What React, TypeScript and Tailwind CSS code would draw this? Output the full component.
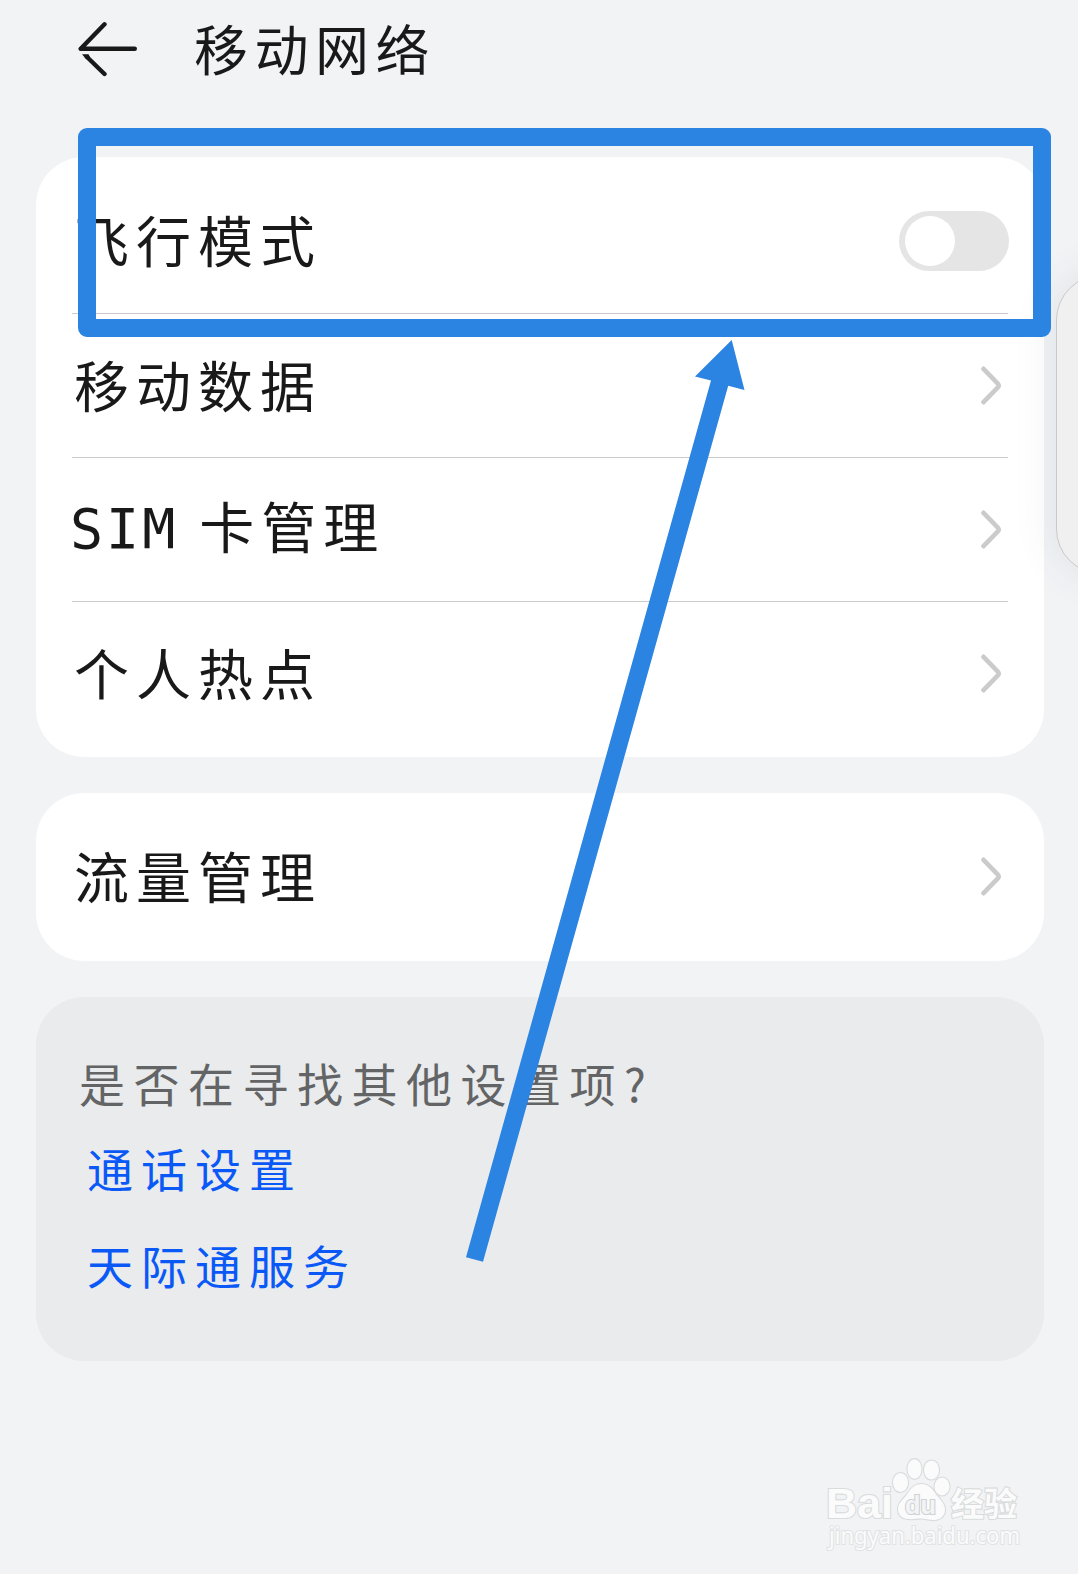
import { ReactNode } from "react";

interface RowProps {
    label: ReactNode;
    divider?: boolean;
    children?: ReactNode;
}

function BackArrow() {
    return (
        <svg
            width="60"
            height="56"
            viewBox="0 0 60 56"
            fill="none"
            stroke="#191919"
            strokeWidth="4.4"
            strokeLinecap="round"
            strokeLinejoin="round"
        >
            <path d="M26.5 3.300 L2.700 27.800 H56.800" />
            <path d="M26.500 53 L9 36" />
            <path d="M4 33.200 H10.500 L12 36 L8 38 Z" fill="#191919" stroke="none" />
        </svg>
    );
}

function Chevron() {
    return (
        <svg
            className="mr-[7px]"
            width="20"
            height="40"
            viewBox="0 0 20 40"
            fill="none"
            stroke="#cbcbcb"
            strokeWidth="4.6"
            strokeLinecap="round"
            strokeLinejoin="round"
        >
            <path d="M2.500 2.800 L16.600 17.400 Q18.600 19.500 16.600 21.600 L2.500 36.200" />
        </svg>
    );
}

function Toggle() {
    return (
        <button
            role="switch"
            aria-checked="false"
            className="-mr-px flex h-[60px] w-[110px] items-center rounded-full bg-[#e5e5e5] pl-1.5"
        >
            <span className="size-[50px] rounded-full bg-white" />
        </button>
    );
}

function Row({ label, divider, children }: RowProps) {
    return (
        <div
            className={
                divider
                    ? "flex h-36 items-center justify-between border-t border-[#cbcbcb]"
                    : "flex h-36 items-center justify-between"
            }
        >
            <span className="pb-[5px] pl-0.5 text-[55px] leading-none tracking-[7px]">{label}</span>
            {children ?? <Chevron />}
        </div>
    );
}

function Watermark() {
    return (
        <svg
            className="absolute top-[1450px] left-[820px]"
            width="210"
            height="110"
            viewBox="0 0 210 110"
            fill="#fbfbfb"
            stroke="#d9dbdc"
            strokeWidth="2.2"
            paintOrder="stroke"
        >
            <text
                x="6"
                y="68"
                fontSize="43"
                fontWeight="700"
                textLength="67"
                lengthAdjust="spacingAndGlyphs"
                className="font-['Liberation_Sans',sans-serif]"
            >
                Bai
            </text>
            <ellipse cx="80.5" cy="32.5" rx="7.5" ry="9.5" />
            <ellipse cx="94.5" cy="19" rx="7" ry="9.8" />
            <ellipse cx="111.5" cy="20" rx="7.5" ry="9.5" />
            <ellipse cx="122" cy="36.5" rx="7.5" ry="9" />
            <path d="M101.5 34 C108 34 113 39 115 43 C118 48 125 52 125 60 C125 66 120 70 114 70 C109 70 105 68.5 101.5 68.5 C97 68.5 93 69.5 88 69 C82 68.5 78 65 78 59 C78 52 85 48 88 43 C91 38 95 34 101.5 34 Z" />
            <text
                x="85"
                y="64"
                fontSize="26"
                fill="#f3f4f5"
                stroke="#cfd1d2"
                fontWeight="700"
                textLength="31"
                lengthAdjust="spacingAndGlyphs"
                className="font-['Liberation_Sans',sans-serif]"
            >
                du
            </text>
            <text x="131" y="66" fontSize="33" fontWeight="700" className="font-['Noto_Sans_CJK_SC',sans-serif]">
                经验
            </text>
            <text
                x="9"
                y="94"
                fontSize="23"
                stroke="#e1e3e4"
                textLength="191"
                lengthAdjust="spacingAndGlyphs"
                className="font-['Noto_Sans',sans-serif]"
            >
                jingyan.baidu.com
            </text>
        </svg>
    );
}

export default function App() {
    return (
        <div className="relative h-[1574px] w-[1078px] overflow-hidden bg-[#f1f3f5] font-['Noto_Sans_CJK_SC',sans-serif] text-[#191919]">
            <header className="flex h-[157px] items-start gap-[56px] pt-[21px] pl-[78px]">
                <BackArrow />
                <h1 className="-mt-[3px] text-[54px] leading-[60px] tracking-[6.5px]">移动网络</h1>
            </header>

            <main className="flex flex-col gap-9 pr-[34px] pl-9">
                <section className="rounded-[48px] bg-white px-9 py-3">
                    <Row label="飞行模式">
                        <Toggle />
                    </Row>
                    <Row label="移动数据" divider />
                    <Row
                        divider
                        label={
                            <>
                                <span className="mr-[21px] -ml-1 font-['DejaVu_Sans_Mono',monospace] tracking-[3px]">
                                    SIM
                                </span>
                                卡管理
                            </>
                        }
                    />
                    <Row label="个人热点" divider />
                </section>

                <section className="rounded-[48px] bg-white px-9 py-3">
                    <Row label="流量管理" />
                </section>

                <section className="flex h-[364px] flex-col items-start rounded-[48px] bg-[#e9ebec] pt-[51px] pl-[43px] text-[46px] leading-[68px] tracking-[8.5px]">
                    <p className="text-[#636465]">是否在寻找其他设置项?</p>
                    <a className="mt-[17px] ml-2 tracking-[8px] text-[#0a59f7]">通话设置</a>
                    <a className="mt-[29px] ml-2 tracking-[8px] text-[#0a59f7]">天际通服务</a>
                </section>
            </main>

            {/* edge panel peeking in from the right */}
            <aside className="absolute top-[275px] left-[1056px] h-[299px] w-40 rounded-[45px] border-[1.5px] border-[#c9c9c9] bg-[#f0f0f0] shadow-[0_0_44px_rgba(70,80,120,0.11)]" />

            {/* highlight box and pointer */}
            <div className="absolute top-[128px] left-[78px] h-[209px] w-[973px] rounded-[9px] border-[18px] border-[#2b83e2]" />
            <svg
                className="pointer-events-none absolute inset-0"
                width="1078"
                height="1574"
                viewBox="0 0 1078 1574"
                fill="#2b83e2"
            >
                <path d="M731.7 340 L744.5 390 L728.2 385.8 L483 1261.8 L466 1257.3 L711 380.5 L695 376.5 Z" />
            </svg>

            <Watermark />
        </div>
    );
}
